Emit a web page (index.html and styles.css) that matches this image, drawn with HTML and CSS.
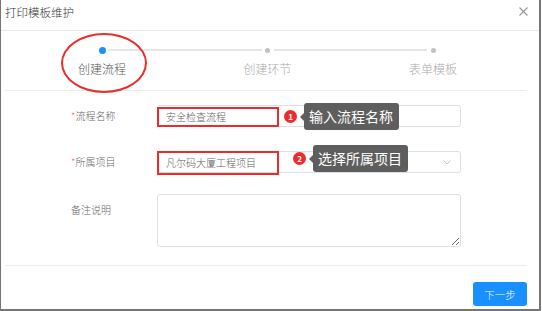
FILE: index.html
```html
<!DOCTYPE html>
<html lang="zh-CN">
<head>
  <meta charset="utf-8" />
  <title>打印模板维护</title>
  <link rel="stylesheet" href="styles.css">
</head>

<body>
  <div class="dialog">
    <div class="dialog-header">
      <span class="dialog-title">打印模板维护</span>
      <span class="dialog-close">
        <svg width="9" height="9" viewBox="0 0 9 9"><path d="M0.5 0.5L8.5 8.5M8.5 0.5L0.5 8.5" stroke="#999" stroke-width="1.1" fill="none"/></svg>
      </span>
    </div>

    <div class="dialog-body">
      <div class="steps">
        <div class="steps-track">
          <div class="step step-active">
            <span class="step-head"><span class="step-dot"></span></span>
            <span class="step-label">创建流程</span>
          </div>
          <div class="step-tail"></div>
          <div class="step">
            <span class="step-head"><span class="step-dot"></span></span>
            <span class="step-label">创建环节</span>
          </div>
          <div class="step-tail"></div>
          <div class="step">
            <span class="step-head"><span class="step-dot"></span></span>
            <span class="step-label">表单模板</span>
          </div>
        </div>
        <div class="mark-ellipse"></div>
      </div>

      <form class="form">
        <div class="form-row">
          <label class="form-label"><i class="req">*</i>流程名称</label>
          <div class="form-field">
            <div class="input">安全检查流程</div>
            <span class="mark-box mark-box-1"></span>
            <div class="note note-1"><span class="note-num">1</span><span class="note-tip">输入流程名称</span></div>
          </div>
        </div>

        <div class="form-row form-row-select">
          <label class="form-label"><i class="req">*</i>所属项目</label>
          <div class="form-field">
            <div class="input select">
              <span>凡尔码大厦工程项目</span>
              <svg width="8" height="5" viewBox="0 0 8 5"><path d="M0.5 0.5L4 4L7.5 0.5" stroke="#c0c4cc" stroke-width="1" fill="none"/></svg>
            </div>
            <span class="mark-box mark-box-2"></span>
            <div class="note note-2"><span class="note-num">2</span><span class="note-tip">选择所属项目</span></div>
          </div>
        </div>

        <div class="form-row form-row-remark">
          <label class="form-label form-label-top">备注说明</label>
          <div class="form-field">
            <textarea class="textarea"></textarea>
          </div>
        </div>
      </form>

      <div class="dialog-footer">
        <button class="btn-primary" type="button">下一步</button>
      </div>
    </div>
  </div>
</body>
</html>
```

FILE: styles.css
```css
html, body {
  margin: 0;
  padding: 0;
  background: #fff;
  font-family: "Noto Sans CJK SC", "Noto Sans", sans-serif;
  font-weight: 300;
}

.dialog {
  box-sizing: border-box;
  width: 541px;
  height: 311px;
  border-left: 1px solid #757575;
  border-right: 2px solid #757575;
  border-bottom: 2px solid #757575;
  background: #fff;
}

.dialog-header {
  display: flex;
  justify-content: space-between;
  height: 30px;
  padding: 0 11px 0 4px;
  border-bottom: 1px solid #e8e8e8;
}

.dialog-title {
  font-size: 11.5px;
  line-height: 24px;
  color: #333;
}

.dialog-close {
  display: flex;
  padding-top: 7px;
}

.dialog-body {
  padding: 0 12px 0 4px;
}

/* steps */
.steps {
  position: relative;
  padding: 15px 90px 13px 93px;
  border-bottom: 1px solid #ececec;
}

.steps-track {
  display: flex;
  align-items: flex-start;
}

.step {
  display: flex;
  flex-direction: column;
  align-items: center;
  width: 8px;
}

.step-head {
  display: flex;
  align-items: center;
  justify-content: center;
  width: 8px;
  height: 8px;
}

.step-dot {
  width: 5px;
  height: 5px;
  border-radius: 50%;
  background: #c2c2c2;
}

.step-active .step-dot {
  width: 7px;
  height: 7px;
  background: #1890ff;
}

.step-label {
  margin-top: 7px;
  font-size: 12px;
  line-height: 16px;
  color: #aaa;
  white-space: nowrap;
}

.step-active .step-label {
  color: #555;
}

.step-tail {
  flex: 1;
  height: 2px;
  margin: 3px 2px 0;
  background: #e6e6e6;
}

.mark-ellipse {
  position: absolute;
  left: 56px;
  top: 2px;
  width: 82px;
  height: 56px;
  border: 2px solid #e8302c;
  border-radius: 50%;
}

/* form */
.form {
  display: flex;
  flex-direction: column;
  margin: 0;
  padding: 14px 0 18px 66px;
  border-bottom: 1px solid #ececec;
}

.form-row {
  display: flex;
  align-items: center;
}

.form-row-select {
  margin-top: 24px;
}

.form-row-remark {
  margin-top: 21px;
  align-items: flex-start;
}

.form-label {
  width: 86px;
  font-size: 10px;
  line-height: 14px;
  color: #666;
}

.form-label-top {
  padding-top: 9px;
}

.req {
  font-style: normal;
  color: #f56c6c;
}

.form-field {
  position: relative;
  width: 304px;
}

.input {
  box-sizing: border-box;
  display: flex;
  align-items: center;
  height: 22px;
  padding: 0 9px 0 8px;
  border: 1px solid #dcdfe6;
  border-radius: 3px;
  font-size: 10px;
  color: #606266;
}

.select {
  justify-content: space-between;
}

.textarea {
  box-sizing: border-box;
  display: block;
  width: 304px;
  height: 53px;
  margin: 0;
  border: 1px solid #dcdfe6;
  border-radius: 3px;
  resize: vertical;
  font-family: inherit;
}

.mark-box {
  position: absolute;
  left: 0;
  width: 122px;
  border: 2px solid #ee2b2b;
  box-sizing: border-box;
}

.mark-box-1 { top: 2px; height: 20px; }
.mark-box-2 { top: 0; height: 24px; }

.note {
  position: absolute;
  display: flex;
  align-items: center;
}

.note-1 { left: 127px; top: -2px; }
.note-2 { left: 136px; top: -6px; }

.note-num {
  display: flex;
  align-items: center;
  justify-content: center;
  width: 13px;
  height: 13px;
  border-radius: 50%;
  background: #ee2b2b;
  color: #fff;
  font-size: 8px;
  font-weight: bold;
}

.note-tip {
  position: relative;
  margin-left: 7px;
  padding: 0 6px 0 5px;
  height: 27px;
  line-height: 27px;
  border-radius: 3px;
  background: #5e5e5e;
  color: #fff;
  font-size: 14px;
  font-weight: 400;
  white-space: nowrap;
}

.note-tip::before {
  content: "";
  position: absolute;
  left: -4px;
  top: 50%;
  margin-top: -4px;
  border-top: 4px solid transparent;
  border-bottom: 4px solid transparent;
  border-right: 4px solid #5e5e5e;
}

/* footer */
.dialog-footer {
  display: flex;
  justify-content: flex-end;
  padding-top: 16px;
}

.btn-primary {
  width: 54px;
  height: 24px;
  padding: 0;
  border: none;
  border-radius: 3px;
  background: #1890ff;
  color: #fff;
  font-family: inherit;
  font-size: 10.5px;
  font-weight: 300;
}
```
